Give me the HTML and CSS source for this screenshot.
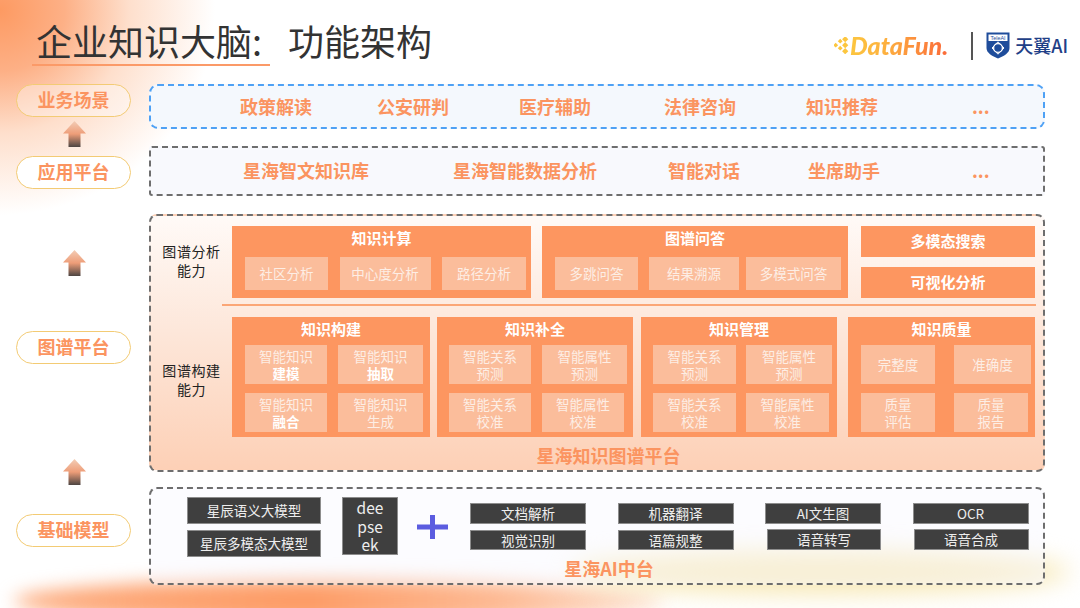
FILE: index.html
```html
<!DOCTYPE html>
<html lang="zh-CN">
<head>
    <meta charset="UTF-8">
    <title>企业知识大脑:功能架构</title>
    <link rel="stylesheet" href="styles.css">
</head>
<body>
<div class="slide">
    <!-- background glow -->
    <div class="glow glow-top"></div>
    <div class="glow glow-bottom"></div>
    <div class="glow glow-yellow"></div>

    <header class="head">
        <h1 class="title"><span class="title-main">企业知识大脑:</span>功能架构</h1>
        <div class="logos">
            <svg class="df-mark" width="17" height="17" viewBox="0 0 17 17">
                <g fill="#fcc63f">
                    <rect x="0" y="6.5" width="3.4" height="3.4" transform="rotate(45 1.7 8.2)"/>
                    <rect x="4.5" y="2.5" width="3.4" height="3.4" transform="rotate(45 6.2 4.2)"/>
                    <rect x="4.5" y="9.5" width="3.4" height="3.4" transform="rotate(45 6.2 11.2)"/>
                    <rect x="9" y="0" width="4.4" height="4.4" transform="rotate(45 11.2 2.2)"/>
                    <rect x="9" y="6" width="4.4" height="4.4" transform="rotate(45 11.2 8.2)"/>
                    <rect x="9" y="12" width="4.4" height="4.4" transform="rotate(45 11.2 14.2)"/>
                </g>
            </svg>
            <span class="df-text">DataFun.</span>
            <span class="logo-rule"></span>
            <svg class="shield" width="24" height="27" viewBox="0 0 24 27">
                <path d="M0.5 0.5H23.5V16C23.5 21 18 24 12 26.5C6 24 0.5 21 0.5 16Z" fill="#1f4d9b"/>
                <rect x="2.5" y="2.5" width="19" height="6.5" fill="#fff"/>
                <text x="12" y="7.8" font-size="5.4" text-anchor="middle" fill="#1f4d9b" font-family="Liberation Sans, sans-serif">TeleAI</text>
                <circle cx="12" cy="16" r="4.4" fill="none" stroke="#fff" stroke-width="1.3"/>
                <path d="M12 9.8L18 16L12 22.2L6 16Z" fill="none" stroke="#fff" stroke-width="1"/>
            </svg>
            <span class="tele-text">天翼AI</span>
        </div>
    </header>

    <main class="board">
        <div class="rail">
            <div class="pill pill-faint">业务场景</div>
            <svg class="arrow arrow-1" width="23" height="26" viewBox="0 0 23 26">
                <use href="#up-arrow"/>
            </svg>
            <div class="pill pill-2">应用平台</div>
            <svg class="arrow arrow-2" width="23" height="26" viewBox="0 0 23 26">
                <use href="#up-arrow"/>
            </svg>
            <div class="pill pill-3">图谱平台</div>
            <svg class="arrow arrow-3" width="23" height="26" viewBox="0 0 23 26">
                <use href="#up-arrow"/>
            </svg>
            <div class="pill pill-4">基础模型</div>
        </div>

        <div class="layers">
            <section class="strip strip-blue">
                <span>政策解读</span><span>公安研判</span><span>医疗辅助</span><span>法律咨询</span><span>知识推荐</span><span>...</span>
            </section>

            <section class="strip strip-gray">
                <span>星海智文知识库</span><span>星海智能数据分析</span><span>智能对话</span><span>坐席助手</span><span>...</span>
            </section>

            <section class="panel panel-graph">
                <div class="cap-row">
                    <div class="cap-label">图谱分析<br>能力</div>
                    <div class="card card-calc">
                        <div class="card-title">知识计算</div>
                        <div class="chips">
                            <div class="chip">社区分析</div>
                            <div class="chip">中心度分析</div>
                            <div class="chip">路径分析</div>
                        </div>
                    </div>
                    <div class="card card-qa">
                        <div class="card-title">图谱问答</div>
                        <div class="chips">
                            <div class="chip">多跳问答</div>
                            <div class="chip">结果溯源</div>
                            <div class="chip chip-pull">多模式问答</div>
                        </div>
                    </div>
                    <div class="side-stack">
                        <div class="side-item">多模态搜索</div>
                        <div class="side-item">可视化分析</div>
                    </div>
                </div>

                <div class="divider"></div>

                <div class="cap-row">
                    <div class="cap-label cap-low">图谱构建<br>能力</div>
                    <div class="card card-build">
                        <div class="card-title">知识构建</div>
                        <div class="cells">
                            <div class="chip"><span>智能知识<br><b>建模</b></span></div>
                            <div class="chip"><span>智能知识<br><b>抽取</b></span></div>
                            <div class="chip"><span>智能知识<br><b>融合</b></span></div>
                            <div class="chip"><span>智能知识<br>生成</span></div>
                        </div>
                    </div>
                    <div class="card card-fill">
                        <div class="card-title">知识补全</div>
                        <div class="cells">
                            <div class="chip"><span>智能关系<br>预测</span></div>
                            <div class="chip"><span>智能属性<br>预测</span></div>
                            <div class="chip"><span>智能关系<br>校准</span></div>
                            <div class="chip chip-narrow"><span>智能属性<br>校准</span></div>
                        </div>
                    </div>
                    <div class="card card-manage">
                        <div class="card-title">知识管理</div>
                        <div class="cells">
                            <div class="chip"><span>智能关系<br>预测</span></div>
                            <div class="chip"><span>智能属性<br>预测</span></div>
                            <div class="chip"><span>智能关系<br>校准</span></div>
                            <div class="chip chip-narrow"><span>智能属性<br>校准</span></div>
                        </div>
                    </div>
                    <div class="card card-quality">
                        <div class="card-title">知识质量</div>
                        <div class="cells">
                            <div class="chip">完整度</div>
                            <div class="chip">准确度</div>
                            <div class="chip"><span>质量<br>评估</span></div>
                            <div class="chip chip-narrow"><span>质量<br>报告</span></div>
                        </div>
                    </div>
                </div>

                <div class="panel-name name-graph">星海知识图谱平台</div>
            </section>

            <section class="panel panel-base">
                <div class="base-row">
                    <div class="models">
                        <div class="dark dark-model">星辰语义大模型</div>
                        <div class="dark dark-model">星辰多模态大模型</div>
                    </div>
                    <div class="dark deepseek">dee<br>pse<br>ek</div>
                    <svg class="plus" width="31" height="24" viewBox="0 0 31 24">
                        <path d="M0 12H31M15.5 0V24" stroke="#5b5ce0" stroke-width="5"/>
                    </svg>
                    <div class="tools">
                        <div class="tool-col">
                            <div class="dark">文档解析</div>
                            <div class="dark dark-low">视觉识别</div>
                        </div>
                        <div class="tool-col">
                            <div class="dark">机器翻译</div>
                            <div class="dark dark-low">语篇规整</div>
                        </div>
                        <div class="tool-col">
                            <div class="dark">AI文生图</div>
                            <div class="dark dark-low nudge-2">语音转写</div>
                        </div>
                        <div class="tool-col">
                            <div class="dark">OCR</div>
                            <div class="dark dark-low nudge-1">语音合成</div>
                        </div>
                    </div>
                </div>
                <div class="panel-name name-base">星海AI中台</div>
            </section>
        </div>
    </main>

    <svg width="0" height="0" class="defs">
        <defs>
            <linearGradient id="arrow-fill" x1="0" y1="0" x2="0" y2="1">
                <stop offset="0" stop-color="#f3cdb6"/>
                <stop offset="0.5" stop-color="#ee9d78"/>
                <stop offset="1" stop-color="#4d4542"/>
            </linearGradient>
            <symbol id="up-arrow" viewBox="0 0 23 26">
                <path d="M11.5 0L23 12.5H17.5V26H5.5V12.5H0Z" fill="url(#arrow-fill)"/>
            </symbol>
        </defs>
    </svg>
</div>
</body>
</html>
```

FILE: styles.css
```css
:root {
    --orange: #fd9660;
    --orange-text: #fb9460;
    --chip: #fbbd9b;
    --dark: #3f3f3f;
}

* {
    box-sizing: border-box;
}

body {
    margin: 0;
    background: #fff;
    font-family: "Noto Sans CJK SC", "Noto Sans", sans-serif;
}

.slide {
    position: relative;
    width: 1080px;
    height: 608px;
    overflow: hidden;
    background: #fff;
}

/* background glow */
.glow {
    position: absolute;
    pointer-events: none;
}

.glow-top {
    left: 0;
    top: 0;
    width: 260px;
    height: 230px;
    background: radial-gradient(ellipse 215px 205px at 0 10px, #fd9a62 0%, #fdb086 30%, #fedfcc 60%, rgba(255,255,255,0) 100%);
}

.glow-bottom {
    left: 14px;
    top: 579px;
    width: 650px;
    height: 44px;
    border-radius: 50%;
    background: linear-gradient(90deg, #fdad80 0%, #fd9c66 45%, #fdba94 75%, #fde3d3 100%);
    filter: blur(9px);
}

.glow-yellow {
    left: 570px;
    top: 550px;
    width: 500px;
    height: 44px;
    border-radius: 50%;
    background: #f7e8b4;
    filter: blur(12px);
}

.defs {
    position: absolute;
}

/* header */
.head {
    position: relative;
    display: flex;
    justify-content: space-between;
    height: 84px;
}

.title {
    margin: 16px 0 0 32px;
    font-size: 36px;
    font-weight: 400;
    line-height: 48px;
    color: #333;
    white-space: nowrap;
}

.title-main {
    display: inline-block;
    width: 238px;
    height: 50px;
    margin-right: 18px;
    padding-left: 4px;
    border-bottom: 2px solid #fb9a68;
}

.logos {
    display: flex;
    align-items: center;
    height: 46px;
    margin: 22px 12px 0 0;
}

.df-mark {
    margin-right: -1px;
}

.df-text {
    font-family: Lato, sans-serif;
    font-size: 25px;
    font-weight: 900;
    font-style: italic;
    background: linear-gradient(90deg, #fcc63f 0%, #fdb13f 35%, #fb6a3a 100%);
    -webkit-background-clip: text;
    background-clip: text;
    color: transparent;
}

.logo-rule {
    width: 2px;
    height: 28px;
    margin: 2px 13px 0 23px;
    background: #555;
}

.tele-text {
    margin-left: 5px;
    font-size: 18px;
    font-weight: 500;
    color: #1f4087;
}

/* main layout */
.board {
    position: relative;
    display: flex;
}

.rail {
    display: flex;
    flex-direction: column;
    align-items: center;
    width: 115px;
    margin-left: 16px;
}

.pill {
    width: 115px;
    height: 33px;
    border: 1px solid #f3cb74;
    border-radius: 17px;
    background: #fff;
    color: var(--orange-text);
    font-size: 18px;
    font-weight: 700;
    line-height: 29px;
    text-align: center;
}

.pill-faint {
    background: rgba(255,255,255,0.35);
}

.pill-2 {
    margin-top: 9px;
}

.pill-3 {
    margin-top: 55px;
}

.pill-4 {
    margin-top: 29px;
}

.arrow {
    flex: none;
    margin-left: 2px;
}

.arrow-1 {
    margin-top: 4px;
}

.arrow-2 {
    margin-top: 61px;
}

.arrow-3 {
    margin-top: 95px;
}

.layers {
    width: 896px;
    margin-left: 18px;
}

/* top strips */
.strip {
    display: grid;
    align-items: center;
    padding-bottom: 2px;
    color: var(--orange-text);
    font-size: 18px;
    font-weight: 700;
    white-space: nowrap;
}

.strip-blue {
    height: 45px;
    padding-left: 89px;
    grid-template-columns: 137px 142px 145px 142px 166px 1fr;
    border: 2px dashed #4ea1f5;
    border-radius: 9px;
    background: #f4f8fd;
}

.strip-gray {
    height: 50px;
    margin-top: 17px;
    padding-left: 92px;
    grid-template-columns: 210px 215px 140px 164px 1fr;
    border: 2px dashed #6e6e6e;
    border-radius: 3px;
    background: #f8f9fd;
}

/* big panels */
.panel {
    border: 2px dashed #6e6e6e;
    border-radius: 8px;
}

.panel-graph {
    height: 258px;
    margin-top: 18px;
    padding-top: 10px;
    background: linear-gradient(180deg, #fffaf7 0%, #fde7da 45%, #fdd0b6 100%);
}

.panel-base {
    height: 98px;
    margin-top: 15px;
    padding-top: 8px;
    background: rgba(248,249,254,0.45);
}

.cap-row {
    display: flex;
    align-items: flex-start;
}

.cap-label {
    flex: none;
    align-self: center;
    width: 81px;
    margin-bottom: 2px;
    font-size: 14px;
    letter-spacing: 0.6px;
    line-height: 19px;
    text-align: center;
    color: #222;
}

.cap-low {
    padding-top: 7px;
}

.divider {
    height: 2px;
    margin: 6px 7px 11px 71px;
    background: #fba676;
}

/* orange cards */
.card {
    flex: none;
    background: var(--orange);
    color: #fff;
}

.card-title {
    font-size: 15px;
    font-weight: 700;
    line-height: 24px;
    text-align: center;
}

.chips {
    display: grid;
    height: 33px;
    margin-top: 7px;
    margin-bottom: 8px;
    padding-left: 13px;
}

.chip {
    display: flex;
    align-items: center;
    justify-content: center;
    background: var(--chip);
    color: #fdeee5;
    font-size: 13.5px;
    line-height: 16.5px;
    text-align: center;
}

.chip b {
    color: #fff;
}

.card-calc {
    width: 299px;
}

.card-calc .chips {
    grid-template-columns: 83px 91px 84px;
    column-gap: 11.5px;
}

.card-qa {
    width: 306px;
    margin-left: 11px;
}

.card-qa .chips {
    grid-template-columns: 83px 90px 91px;
    column-gap: 11px;
}

.chip-pull {
    margin-left: -4px;
}

.side-stack {
    display: flex;
    flex-direction: column;
    gap: 10px;
    width: 174px;
    margin-left: 13px;
}

.side-item {
    height: 31px;
    background: var(--orange);
    color: #fff;
    font-size: 15px;
    font-weight: 700;
    line-height: 29px;
    text-align: center;
}

.cells {
    display: grid;
    grid-template-rows: 39px 39px;
    row-gap: 9px;
    margin-top: 4px;
    padding-bottom: 5px;
}

.card-build {
    width: 198px;
}

.card-build .cells {
    grid-template-columns: 82px 85px;
    column-gap: 11px;
    padding-left: 13px;
}

.card-fill {
    width: 196px;
    margin-left: 7px;
}

.card-fill .cells {
    grid-template-columns: 82px 85px;
    column-gap: 11px;
    padding-left: 12px;
}

.card-manage {
    width: 196px;
    margin-left: 8px;
}

.card-manage .cells {
    grid-template-columns: 83px 86px;
    column-gap: 10px;
    padding-left: 12px;
}

.card-quality {
    width: 187px;
    margin-left: 11px;
}

.card-quality .cells {
    grid-template-columns: 74px 77px;
    column-gap: 19px;
    padding-left: 13px;
}

.cells .chip-narrow {
    width: calc(100% - 3px);
}

.panel-name {
    color: var(--orange-text);
    font-size: 18px;
    font-weight: 700;
    text-align: center;
}

.name-graph {
    margin-top: 5px;
    padding-left: 23px;
    line-height: 26px;
}

.name-base {
    padding-left: 24px;
    line-height: 26px;
}

/* dark boxes */
.base-row {
    display: flex;
    align-items: flex-start;
    height: 58px;
    padding-left: 36px;
}

.dark {
    height: 21px;
    border: 1px solid #8d8d8d;
    background: var(--dark);
    color: #eee;
    font-size: 13.5px;
    line-height: 19px;
    text-align: center;
    white-space: nowrap;
}

.models {
    display: flex;
    flex-direction: column;
    gap: 6px;
    width: 134px;
}

.dark-model {
    height: 27px;
    line-height: 24px;
}

.deepseek {
    width: 56px;
    height: 58px;
    margin-left: 21px;
    font-size: 15.5px;
    line-height: 18.5px;
}

.plus {
    flex: none;
    margin: 18px 0 0 19px;
}

.tools {
    display: flex;
    gap: 31.5px;
    margin: 6px 0 0 22px;
}

.tool-col {
    width: 116px;
}

.dark-low {
    margin-top: 6px;
    height: 20px;
    line-height: 18px;
}

.nudge-2 {
    margin-top: 5px;
    margin-left: 2px;
    height: 21px;
}

.nudge-1 {
    margin-top: 5px;
    margin-left: 1px;
    height: 21px;
}
```
